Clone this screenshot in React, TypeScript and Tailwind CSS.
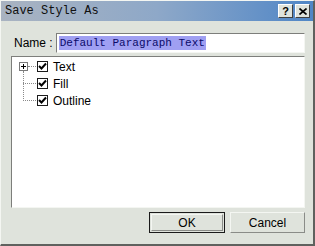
import React from 'react';

const sans = { fontFamily: '"Liberation Sans", Arial, sans-serif' };
const mono = { fontFamily: '"Liberation Mono", "DejaVu Sans Mono", monospace' };

function CheckBox() {
  return (
    <div className="w-[11px] h-[11px] bg-white border border-[#1c1c1c] flex items-center justify-center">
      <svg width="9" height="9" viewBox="0 0 9 9">
        <path d="M1 4 L3.5 6.5 L8 1.5" stroke="#000" strokeWidth="2" fill="none" />
      </svg>
    </div>
  );
}

function TreeRow({ label, first }: { label: string; first?: boolean }) {
  return (
    <div className="flex items-center h-[17px]">
      <div className="w-[21px] h-full relative">
        {first ? (
          <div className="absolute left-[3px] top-[4px] w-[9px] h-[9px] border border-[#7a7a7a] bg-white flex items-center justify-center">
            <svg width="7" height="7" viewBox="0 0 7 7">
              <path d="M1 3.5 H6 M3.5 1 V6" stroke="#000" strokeWidth="1" />
            </svg>
          </div>
        ) : (
          <div className="absolute left-[7px] top-[8px] w-[13px] border-t border-dotted border-[#8a8a8a]" />
        )}
        {first && <div className="absolute left-[12px] top-[8px] w-[8px] border-t border-dotted border-[#8a8a8a]" />}
      </div>
      <CheckBox />
      <span className="ml-[5px] text-[12px] text-black" style={sans}>{label}</span>
    </div>
  );
}

export default function App() {
  return (
    <div className="w-[315px] h-[246px] bg-[#dfe3dc] border-r-2 border-b-2 border-[#5f615e] border-l border-t border-l-[#f4f6f2] border-t-[#f4f6f2] flex flex-col">
      <div className="h-[20px] flex items-center justify-between bg-gradient-to-r from-[#a9b3c1] via-[#8ea8c8] to-[#4f86c6] pl-[4px] pr-[3px]">
        <span className="text-[12px] text-[#101010]" style={mono}>Save Style As</span>
        <div className="flex gap-[2px]">
          <div className="w-[15px] h-[14px] bg-[#dfe3dc] border border-t-white border-l-white border-r-[#404040] border-b-[#404040] flex items-center justify-center text-[11px] font-bold leading-none" style={sans}>?</div>
          <div className="w-[15px] h-[14px] bg-[#dfe3dc] border border-t-white border-l-white border-r-[#404040] border-b-[#404040] flex items-center justify-center">
            <svg width="8" height="7" viewBox="0 0 8 7">
              <path d="M0.5 0.5 L7.5 6.5 M7.5 0.5 L0.5 6.5" stroke="#000" strokeWidth="1.6" />
            </svg>
          </div>
        </div>
      </div>

      <div className="flex-1 flex flex-col pl-[10px] pr-[8px] pt-[12px] pb-[10px]">
        <div className="flex items-center gap-[3px]">
          <span className="ml-[3px] text-[12px] text-black" style={sans}>Name :</span>
          <div className="flex-1 h-[20px] bg-white border border-t-[#7d7e7b] border-l-[#7d7e7b] border-r-[#f4f6f2] border-b-[#f4f6f2] flex items-center px-[2px]">
            <span className="bg-[#9f9ff2] text-[#0b0b6a] text-[11px] leading-[14px] px-[1px]" style={mono}>Default Paragraph Text</span>
          </div>
        </div>

        <div className="mt-[3px] h-[152px] bg-white border border-t-[#7d7e7b] border-l-[#7d7e7b] border-r-[#f4f6f2] border-b-[#f4f6f2] pt-[1px] pl-[4px]">
          <div className="relative">
            <div className="absolute left-[7px] top-[13px] h-[30px] border-l border-dotted border-[#8a8a8a]" />
            <TreeRow label="Text" first />
            <TreeRow label="Fill" />
            <TreeRow label="Outline" />
          </div>
        </div>

        <div className="mt-[4px] flex justify-end gap-[5px]">
          <button className="w-[76px] h-[21px] border border-[#1a1a1a] text-[12px] text-black bg-[#dfe3dc] flex items-center justify-center" style={sans}>
            <span className="w-[72px] h-[17px] border border-[#f4f6f2] border-r-[#8a8c88] border-b-[#8a8c88] flex items-center justify-center">OK</span>
          </button>
          <button className="w-[75px] h-[21px] border border-[#f4f6f2] border-r-[#8a8c88] border-b-[#8a8c88] text-[12px] text-black bg-[#dfe3dc] flex items-center justify-center" style={sans}>Cancel</button>
        </div>
      </div>
    </div>
  );
}
